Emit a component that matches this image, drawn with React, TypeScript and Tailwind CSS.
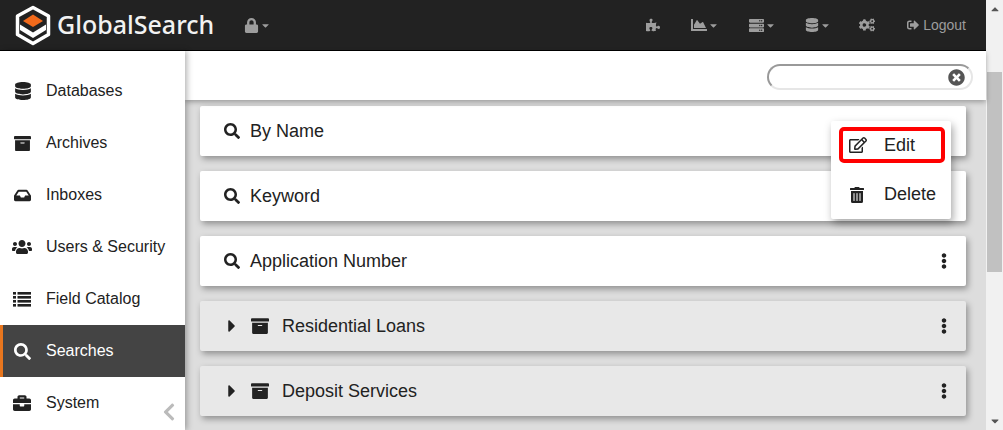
import { ComponentType } from 'react';
import {
  FaArchive,
  FaBriefcase,
  FaCaretDown,
  FaCaretRight,
  FaCaretUp,
  FaChartArea,
  FaChevronLeft,
  FaCogs,
  FaDatabase,
  FaEllipsisV,
  FaInbox,
  FaLock,
  FaPuzzlePiece,
  FaRegEdit,
  FaSearch,
  FaServer,
  FaSignOutAlt,
  FaTimesCircle,
  FaTrashAlt,
  FaUsers,
} from 'react-icons/fa';

function ListIcon({ size = 18 }: { size?: number }) {
  return (
    <svg width={size} height={size} viewBox="0 0 18 18" fill="currentColor">
      <rect x="0" y="2" width="3" height="2.6" />
      <rect x="4.5" y="2" width="13.5" height="2.6" />
      <rect x="0" y="6" width="3" height="2.6" />
      <rect x="4.5" y="6" width="13.5" height="2.6" />
      <rect x="0" y="10" width="3" height="2.6" />
      <rect x="4.5" y="10" width="13.5" height="2.6" />
      <rect x="0" y="14" width="3" height="2.6" />
      <rect x="4.5" y="14" width="13.5" height="2.6" />
    </svg>
  );
}

const sideItems = [
  { icon: FaDatabase, label: 'Databases', size: 18, offset: 'ml-0' },
  { icon: FaArchive, label: 'Archives', size: 17, offset: 'ml-0' },
  { icon: FaInbox, label: 'Inboxes', size: 17, offset: 'ml-0' },
  { icon: FaUsers, label: 'Users & Security', size: 20, offset: '-ml-[2px]' },
  { icon: ListIcon, label: 'Field Catalog', size: 18, offset: '-ml-[1px]' },
  { icon: FaSearch, label: 'Searches', size: 17, active: true, offset: 'ml-0' },
  { icon: FaBriefcase, label: 'System', size: 18, offset: '-ml-[1px]' },
];

const cards = [
  { label: 'By Name', search: true },
  { label: 'Keyword', search: true },
  { label: 'Application Number', search: true, dots: true },
  { label: 'Residential Loans', dots: true },
  { label: 'Deposit Services', dots: true },
];

function Logo() {
  return (
    <svg width="36" height="41" viewBox="0 0 36 41" className="shrink-0">
      <path d="M18 2.5 L33.5 11 V29.5 L18 38.5 L2.5 29.5 V11 Z" fill="none" stroke="#fff" strokeWidth="3.5" strokeLinejoin="round" />
      <path d="M18 9.5 L28 16 L18 22 L8 16 Z" fill="#f26a1b" />
      <path d="M5 19.5 L18 27.5 L31 19.5 V25 L18 33 L5 25 Z" fill="#fff" />
    </svg>
  );
}

function NavIcon({ icon: Icon, caret, size = 15 }: { icon: ComponentType<{ size?: number }>; caret?: boolean; size?: number }) {
  return (
    <div className="flex items-center text-[#9d9d9d]">
      <Icon size={size} />
      {caret && <FaCaretDown size={11} className="ml-px" />}
    </div>
  );
}

function Card({ label, search, dots }: { label: string; search?: boolean; dots?: boolean }) {
  return (
    <div
      className={`flex h-[50px] shrink-0 items-center rounded-[2px] shadow-[2px_3px_6px_rgba(0,0,0,0.35)] ${
        search ? 'bg-white pl-[24px]' : 'bg-[#e8e8e8] pl-[22px]'
      } pr-[14px]`}
    >
      {search ? (
        <FaSearch size={16} className="mr-[10px] text-[#222]" />
      ) : (
        <>
          <FaCaretRight size={20} className="mr-[9px] text-[#222]" />
          <FaArchive size={18} className="mr-[13px] text-[#222]" />
        </>
      )}
      <span className="flex-1 text-[18px] text-[#222]">{label}</span>
      {dots && <FaEllipsisV size={16} className="text-[#222]" />}
    </div>
  );
}

export default function App() {
  return (
    <div className="flex h-[430px] w-[1003px] overflow-hidden bg-[#ddd] font-['Liberation_Sans',sans-serif]">
      <div className="flex min-w-0 flex-1 flex-col">
        {/* Top bar */}
        <header className="flex h-[51px] shrink-0 items-center border-b border-black bg-[#222] pl-[15px] pr-[20px]">
          <Logo />
          <span className="ml-[6px] font-['Noto_Sans',sans-serif] text-[25px] font-medium text-[#f2f2f2]">GlobalSearch</span>
          <div className="ml-[30px]">
            <NavIcon icon={FaLock} caret size={15} />
          </div>
          <div className="ml-auto flex items-center">
            <NavIcon icon={FaPuzzlePiece} size={14} />
            <div className="ml-[31px]"><NavIcon icon={FaChartArea} caret size={16} /></div>
            <div className="ml-[30px]"><NavIcon icon={FaServer} caret size={15} /></div>
            <div className="ml-[29px]"><NavIcon icon={FaDatabase} caret size={14} /></div>
            <div className="ml-[28px]"><NavIcon icon={FaCogs} size={16} /></div>
            <div className="ml-[32px] flex items-center text-[14px] text-[#9d9d9d]">
              <FaSignOutAlt size={12} className="mr-[4px]" />
              Logout
            </div>
          </div>
        </header>

        <div className="flex min-h-0 flex-1">
          {/* Sidebar */}
          <aside className="relative z-20 flex w-[185px] shrink-0 flex-col bg-white pt-[14px] shadow-[2px_0_6px_rgba(0,0,0,0.3)]">
            {sideItems.map((item) => (
              <div
                key={item.label}
                className={`flex h-[52px] shrink-0 items-center text-[16px] ${
                  item.active
                    ? 'border-l-[3px] border-[#e8761e] bg-[#444] pl-[11px] text-white'
                    : 'pl-[14px] text-[#222]'
                }`}
              >
                <span className="flex w-[32px] justify-start">
                  <span className={item.offset}>
                    <item.icon size={item.size} />
                  </span>
                </span>
                {item.label}
              </div>
            ))}
            <FaChevronLeft size={20} className="absolute bottom-[8px] right-[6px] text-[#bbb]" />
          </aside>

          <div className="relative flex min-w-0 flex-1 flex-col">
            {/* Search strip */}
            <div className="relative z-10 flex h-[49px] shrink-0 items-center justify-end bg-white pr-[13px] pt-[3px] shadow-[0_2px_5px_rgba(0,0,0,0.3)]">
              <div className="flex h-[26px] w-[206px] items-center justify-end rounded-full border-2 border-[#e6e6e6] border-t-[#999] border-l-[#999] pr-[6px]">
                <FaTimesCircle size={17} className="text-[#555]" />
              </div>
            </div>

            {/* Search list */}
            <main className="flex flex-col gap-[15px] pl-[15px] pr-[20px] pt-[6px]">
              {cards.map((card) => (
                <Card key={card.label} label={card.label} search={card.search} dots={card.dots} />
              ))}
            </main>

            {/* Row menu */}
            <div className="absolute left-[646px] top-[70px] z-30 flex h-[98px] w-[120px] flex-col rounded-[2px] bg-white px-[8px] pt-[6px] text-[18px] text-[#222] shadow-[2px_4px_8px_rgba(0,0,0,0.35)]">
              <div className="flex h-[36px] w-[106px] items-center rounded-[5px] border-[4px] border-[#f00] pl-[6px]">
                <FaRegEdit size={18} />
                <span className="ml-[17px]">Edit</span>
              </div>
              <div className="mt-[18px] flex items-center pl-[10px]">
                <FaTrashAlt size={16} />
                <span className="ml-[19px]">Delete</span>
              </div>
            </div>
          </div>
        </div>
      </div>

      {/* Scrollbar */}
      <div className="flex w-[17px] shrink-0 flex-col items-center bg-[#f1f1f1]">
        <FaCaretUp size={12} className="mt-[3px] text-[#555]" />
        <div className="mt-[57px] h-[200px] w-[15px] bg-[#c1c1c1]" />
        <FaCaretDown size={12} className="mt-auto mb-[3px] text-[#555]" />
      </div>
    </div>
  );
}
